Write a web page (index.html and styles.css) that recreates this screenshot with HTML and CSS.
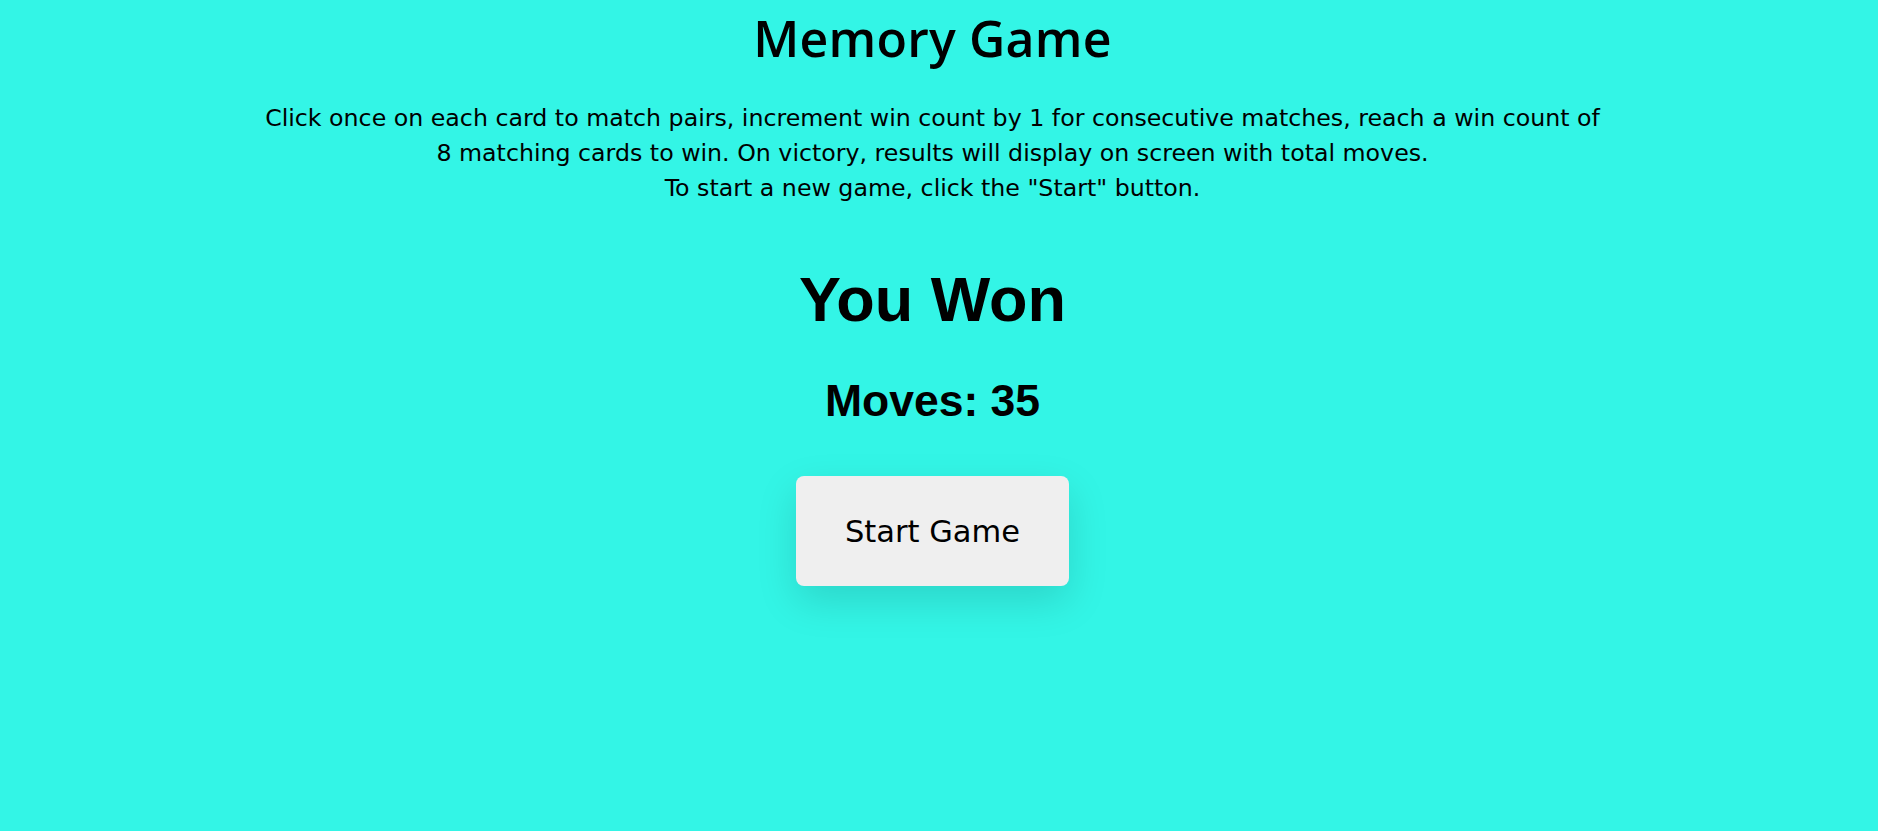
FILE: index.html
```html
<!DOCTYPE html>
<html lang="en">
<head>
<meta charset="utf-8">
<title>Memory Game</title>
<link rel="stylesheet" href="styles.css">
</head>
<body>
<main class="page">
  <h1 class="title">Memory Game</h1>
  <p class="rules">Click once on each card to match pairs, increment win count by 1 for consecutive matches, reach a win count of<br>8 matching cards to win. On victory, results will display on screen with total moves.<br>To start a new game, click the "Start" button.</p>
  <h2 class="won">You Won</h2>
  <h3 class="moves">Moves: 35</h3>
  <button class="start" type="button">Start Game</button>
</main>
</body>
</html>
```
FILE: styles.css
```css
html, body {
  margin: 0;
  padding: 0;
  background: #33f5e6;
  height: 100%;
}

body {
  color: #000;
  font-family: "DejaVu Sans", "Open Sans", sans-serif;
  overflow: hidden;
}

.page {
  display: flex;
  flex-direction: column;
  align-items: center;
  padding: 8px 13px 0 0;
}

.title {
  margin: 0;
  font-family: "Open Sans", sans-serif;
  font-weight: 600;
  font-size: 50px;
  line-height: 60px;
  letter-spacing: 0.2px;
}

.rules {
  margin: 33px 0 0;
  align-self: stretch;
  text-align: center;
  font-family: "DejaVu Sans", sans-serif;
  font-weight: 400;
  font-size: 23.7px;
  line-height: 35px;
  white-space: nowrap;
}

.won {
  margin: 57px 0 0;
  font-family: "Liberation Sans", Arial, sans-serif;
  font-weight: 700;
  font-size: 63px;
  line-height: 72px;
}

.moves {
  margin: 41px 0 0;
  font-family: "Liberation Sans", Arial, sans-serif;
  font-weight: 700;
  font-size: 44.5px;
  line-height: 50px;
}

.start {
  margin-top: 50px;
  width: 273px;
  height: 110px;
  border: none;
  border-radius: 8px;
  background: #efefef;
  color: #000;
  font-family: "DejaVu Sans", sans-serif;
  font-weight: 400;
  font-size: 30.5px;
  display: flex;
  align-items: center;
  justify-content: center;
  box-shadow: 0 15px 40px rgba(0, 0, 0, 0.13);
  cursor: pointer;
}
```
